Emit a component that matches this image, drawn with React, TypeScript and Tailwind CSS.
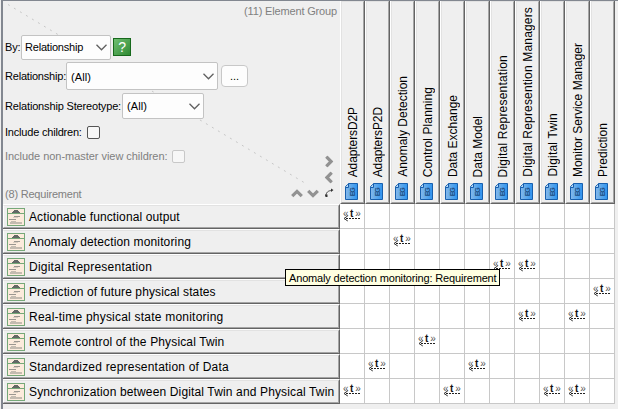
import React from "react";

const columns = [
  { name: "AdaptersD2P", cls: "tracking-[-0.1px]" },
  { name: "AdaptersP2D", cls: "tracking-[-0.1px]" },
  { name: "Anomaly Detection", cls: "tracking-[0px]" },
  { name: "Control Planning", cls: "tracking-[0.1px]" },
  { name: "Data Exchange", cls: "tracking-[0px]" },
  { name: "Data Model", cls: "tracking-[0px]" },
  { name: "Digital Representation", cls: "tracking-[0.2px]" },
  { name: "Digital Represention Managers", cls: "tracking-[0.17px]" },
  { name: "Digital Twin", cls: "tracking-[0.2px]" },
  { name: "Monitor Service Manager", cls: "tracking-[0px]" },
  { name: "Prediction", cls: "tracking-[0.05px]" },
];

const rows = [
  { name: "Actionable functional output", cls: "tracking-[0.12px]", marks: [0] },
  { name: "Anomaly detection monitoring", cls: "tracking-[0.14px]", marks: [2] },
  { name: "Digital Representation", cls: "tracking-[0.23px]", marks: [6, 7] },
  { name: "Prediction of future physical states", cls: "tracking-[0.11px]", marks: [10] },
  { name: "Real-time physical state monitoring", cls: "tracking-[0.22px]", marks: [7, 9] },
  { name: "Remote control of the Physical Twin", cls: "tracking-[0.14px]", marks: [3] },
  { name: "Standardized representation of Data", cls: "tracking-[0.2px]", marks: [1, 5] },
  { name: "Synchronization between Digital Twin and Physical Twin", cls: "tracking-[0.14px]", marks: [0, 4, 8, 9] },
];

function ElementGroupIcon() {
  return (
    <svg width="13" height="17" viewBox="0 0 13 17" className="block shrink-0">
      <defs>
        <linearGradient id="groupFill" x1="0" x2="1">
          <stop offset="0" stopColor="#86b9ea" />
          <stop offset="1" stopColor="#2f94ee" />
        </linearGradient>
      </defs>
      <path d="M3.5 .5H12.5V16.5H.5V3.5Z" fill="url(#groupFill)" stroke="#175fae" />
      <path d="M.5 4.5H3.5V.5" fill="#b8d8f4" stroke="#175fae" />
      <text transform="translate(9.5 13.2) rotate(-90)" fontSize="7" fontWeight="700" fill="#1d4c80" textLength="9" fontFamily="Liberation Sans, sans-serif">EG</text>
    </svg>
  );
}

function RequirementIcon() {
  return (
    <svg width="18" height="18" viewBox="0 0 18 18" className="block shrink-0" shapeRendering="crispEdges">
      <rect x=".5" y=".5" width="17" height="17" fill="#fcebdc" stroke="#75a878" />
      <path d="M7 2H11V3H12V4H13V5H5V4H6V3H7Z" fill="#626864" />
      <path d="M1 5.5H17" stroke="#75a878" />
      <path d="M7 8H13V9H7ZM2 11H9V12H2Z" fill="#9b9790" />
      <path d="M6 9H11V10H6Z" fill="#d9cdc0" />
      <path d="M4 13H9V14H4ZM3 14H15V16H3Z" fill="#c4bbb0" />
    </svg>
  );
}

function TraceMark() {
  return (
    <svg width="19" height="13" viewBox="0 0 19 13" className="block overflow-visible">
      <g fontFamily="Liberation Sans, sans-serif" fill="#555">
        <text x="0" y="8" fontSize="10">«</text>
        <text x="7" y="7.6" fontSize="10" fontWeight="700" fill="#111">t</text>
        <text x="12.2" y="8" fontSize="10">»</text>
      </g>
      <path d="M4.8 6.8L1 9.5L4.8 12" fill="none" stroke="#333" />
      <path d="M3 9.5H18" stroke="#222" strokeDasharray="2 1" shapeRendering="crispEdges" />
    </svg>
  );
}

function Select({ label, size, pad }: { label: string; size: string; pad: string }) {
  return (
    <div className={`flex shrink-0 items-center justify-between rounded-[2px] border border-[#c3c3c3] bg-[#fdfdfd] pr-[3px] ${size}`}>
      <span className={pad}>{label}</span>
      <svg width="11" height="7" viewBox="0 0 11 7"><path d="M.5 .8L5.5 5.8L10.5 .8" fill="none" stroke="#606060" strokeWidth="1.3" /></svg>
    </div>
  );
}

function Chevron({ turn }: { turn: string }) {
  return (
    <svg width="12" height="9" viewBox="0 0 12 9" className={`block shrink-0 ${turn}`}>
      <path d="M1.2 7.2L6 2.4L10.8 7.2" fill="none" stroke="#929292" strokeWidth="3.2" />
    </svg>
  );
}

function Corner() {
  return (
    <div className="relative h-[203px] w-[337px] shrink-0 text-[11px] leading-[14px] tracking-[-0.2px]">
      <svg className="absolute left-0 top-0" width="337" height="203">
        <path d="M5 3.5L301 181.5" stroke="#c7c7c7" strokeDasharray="2 5" />
      </svg>
      <div className="relative flex h-full flex-col pl-[2px]">
        <div className="flex h-[33px] justify-end pr-[3px] pt-[3px] text-[#808080]">
          <span className="tracking-[-0.16px]">(11) Element Group</span>
        </div>
        <div className="flex h-[26px] items-center">
          <span className="w-4">By:</span>
          <Select label="Relationship" size="w-[90px] h-[25px]" pad="pl-[3px]" />
          <span className="ml-[2px] flex h-[18px] w-[18px] items-center justify-center border border-[#17691c] bg-linear-to-br from-[#6fbf72] to-[#2f8a33] text-[14px] text-white">?</span>
        </div>
        <div className="mt-[2px] flex h-[28px] items-center">
          <span className="w-[61px] whitespace-nowrap">Relationship:</span>
          <Select label="(All)" size="w-[152px] h-[28px] tracking-[0.1px]" pad="pl-[4px] pt-[2px]" />
          <span className="ml-[3px] flex h-[22px] w-[27px] items-center justify-center rounded-[4px] border border-[#c8c8c8] bg-[#fdfdfd] tracking-normal">...</span>
        </div>
        <div className="mt-[3px] flex h-[26px] items-center">
          <span className="w-[117px] whitespace-nowrap tracking-[-0.16px]">Relationship Stereotype:</span>
          <Select label="(All)" size="w-[82px] h-[26px] tracking-[0.1px]" pad="pl-[4px]" />
        </div>
        <div className="mt-[6px] flex h-[14px] items-center">
          <span className="w-[82px] whitespace-nowrap">Include children:</span>
          <span className="h-[13px] w-[13px] rounded-[2px] border border-[#555] bg-[#f7f7f7]" />
        </div>
        <div className="mt-[10px] flex h-[14px] items-center text-[#808080]">
          <span className="w-[167px] whitespace-nowrap tracking-[-0.04px]">Include non-master view children:</span>
          <span className="h-[13px] w-[13px] rounded-[2px] border border-[#c8c8c8] bg-[#f7f7f7]" />
        </div>
        <div className="flex h-[41px] justify-between pr-[5px] text-[#808080]">
          <span className="self-end pb-[3px]">(8) Requirement</span>
          <div className="flex items-end gap-[4px]">
            <div className="pb-[6px]"><Chevron turn="" /></div>
            <div className="pb-[6px]"><Chevron turn="rotate-180" /></div>
            <div className="-mt-[10px] flex h-[51px] w-[12px] flex-col items-center">
              <div className="flex h-[16px] items-center"><Chevron turn="rotate-90" /></div>
              <div className="flex h-[16px] items-center"><Chevron turn="-rotate-90" /></div>
              <svg width="10" height="10" viewBox="0 0 10 10" className="mt-[3px] block">
                <path d="M2 8C2 4.5 4 2.5 8 2.5" fill="none" stroke="#444" />
                <path d="M7 .5L9.5 2L7 4ZM1 6.5H3.5V9H1.5Z" fill="#333" />
              </svg>
            </div>
          </div>
        </div>
      </div>
    </div>
  );
}

export default function App() {
  return (
    <div className="relative h-[409px] w-[618px] overflow-hidden bg-[#efefef] pl-px font-['Liberation_Sans',Arial,sans-serif] text-black">
      <div className="h-full border-l-2 border-t border-[#828790]">
        <div className="flex">
          <Corner />
          {columns.map((c) => (
            <div key={c.name} className="h-[203px] w-[25px] border-b border-l border-r border-b-[#646464] border-l-white border-r-[#646464]">
              <div className="flex h-full flex-col items-center justify-end border border-b-[#a5a5a5] border-l-[#e2e2e2] border-r-[#a5a5a5] border-t-[#e2e2e2] pb-[2px]">
                <span className={`mb-[6px] rotate-180 whitespace-nowrap text-[12px] leading-[16px] [writing-mode:vertical-rl] ${c.cls}`}>{c.name}</span>
                <div className="mr-[2px]"><ElementGroupIcon /></div>
              </div>
            </div>
          ))}
        </div>
        {rows.map((r) => (
          <div key={r.name} className="flex h-[25px]">
            <div className="w-[337px] border-b border-r border-t border-b-[#646464] border-r-[#646464] border-t-white">
              <div className="flex h-full items-center border border-b-[#a5a5a5] border-l-white border-r-[#a5a5a5] border-t-[#e2e2e2] pl-[3px]">
                <RequirementIcon />
                <span className={`ml-[4px] whitespace-nowrap text-[12px] leading-[16px] ${r.cls}`}>{r.name}</span>
              </div>
            </div>
            {columns.map((c, i) => (
              <div key={c.name} className="h-[25px] w-[25px] border-b border-r border-[#c8c8c8] bg-white pl-[3px] pt-[5px]">
                {r.marks.includes(i) && <TraceMark />}
              </div>
            ))}
          </div>
        ))}
      </div>
      <div className="absolute left-[285px] top-[269px] flex h-[17px] w-[215px] items-center whitespace-nowrap border border-black bg-[#ffffe1] pl-[3px] pt-px text-[11px] leading-[14px] tracking-[-0.16px]">
        Anomaly detection monitoring: Requirement
      </div>
    </div>
  );
}
